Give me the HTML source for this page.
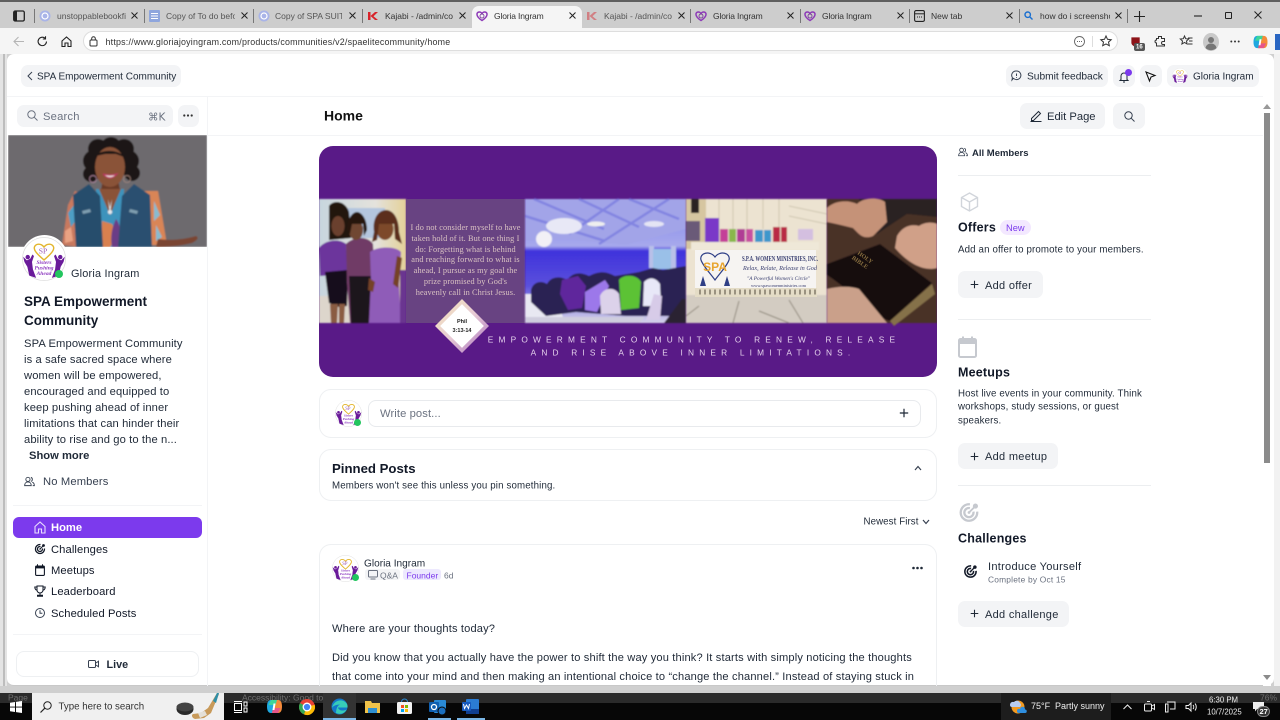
<!DOCTYPE html>
<html lang="en">
<head>
<meta charset="utf-8">
<title>Gloria Ingram</title>
<style>
html,body{margin:0;padding:0;width:1280px;height:720px;overflow:hidden;background:#d0d0d0;font-family:"Liberation Sans",sans-serif;color:#111827}
*{box-sizing:border-box}
.a{position:absolute}
.t{position:absolute;white-space:nowrap;line-height:1;transform:translateY(calc(-50% + 1.5px))}
.pill{position:absolute;background:#f3f4f6;border-radius:7px}
.tab{position:absolute;top:16px;font-size:8.5px;color:#333;white-space:nowrap;line-height:1;transform:translateY(-50%);overflow:hidden}
.x{position:absolute;top:11px;width:9px;height:9px}
.sep{position:absolute;top:9px;width:1px;height:14px;background:#777}
.line{position:absolute;height:1px;background:#eceef0}
.ic{position:absolute;overflow:visible}
.d{font-size:11.2px;letter-spacing:.11px;color:#1f2937;left:24px}
.nav{font-size:11.2px;letter-spacing:.1px;color:#111827;left:51px}
.r{font-size:9.7px;letter-spacing:.15px;color:#1f2937;left:958px}
.h{font-size:12.5px;font-weight:bold;letter-spacing:.2px;color:#111827;left:958px}
.btn{font-size:11px;letter-spacing:.3px;color:#1f2937}
.p{font-size:11.1px;letter-spacing:.155px;color:#1f2937;left:332px}
.tb{position:absolute;top:693px;height:27px}
.f{font-size:8.500px;color:#6f6f6f;top:696px}
</style>
</head>
<body>
<svg width="0" height="0" style="position:absolute">
<defs>
<symbol id="logo" viewBox="0 0 46 46">
<circle cx="23" cy="23" r="22.5" fill="#fff" stroke="#ddd" stroke-width=".8"/>
<path d="M23 24C16 18 12 14 13 10.500C14.500 6.500 20 6.500 23 10.500C26 6.500 31.500 6.500 33 10.500C34 14 30 18 23 24Z" fill="none" stroke="#e3b62e" stroke-width="1.500"/>
<text x="22" y="17" font-size="8" fill="#9b59b6" text-anchor="middle" font-family="Liberation Serif,serif">SP</text>
<circle cx="6" cy="21" r="2.300" fill="#6a1b9a"/><circle cx="40" cy="21" r="2.300" fill="#6a1b9a"/>
<path d="M2 22l3 3 4-2 2-4 1 1-2 6 1 8 3 8-6-2-2-9-3-5z" fill="#6a1b9a" stroke="#6a1b9a" stroke-width=".9"/>
<path d="M44 22l-3 3-4-2-2-4-1 1 2 6-1 8-3 8 6-2 2-9 3-5z" fill="#6a1b9a" stroke="#6a1b9a" stroke-width=".9"/>
<g font-size="5.800" font-style="italic" font-weight="bold" fill="#8e3bc0" text-anchor="middle" font-family="Liberation Serif,serif">
<text x="23" y="28">Sisters</text><text x="23" y="34">Pushing</text><text x="23" y="40">Ahead</text></g>
</symbol>
<symbol id="heart" viewBox="0 0 12 12"><path d="M6 10.5C2 8 .7 6 1 3.8C1.4 1.6 4.5 1.2 6 3.5C7.5 1.2 10.600 1.600 11 3.800C11.300 6 10 8 6 10.500Z" fill="none" stroke="#8e3bb8" stroke-width="1.500"/><circle cx="6" cy="6" r="2" fill="none" stroke="#6b2d8f" stroke-width=".8"/></symbol>
<symbol id="c" viewBox="0 0 12 12"><circle cx="6" cy="6" r="5.500" fill="#a9b4e8"/><circle cx="6" cy="6" r="3" fill="none" stroke="#fff" stroke-width="1.200"/></symbol>
<symbol id="k" viewBox="0 0 12 12"><path d="M1 2h2.500v8H1zM3.500 6L8 2h3L6.500 6.200 11 10H8z" fill="#d8232a"/></symbol>
<symbol id="x" viewBox="0 0 9 9"><path d="M1.500 1.500l6 6M7.500 1.500l-6 6" stroke="#222" stroke-width="1"/></symbol>
<symbol id="plus" viewBox="0 0 10 10"><path d="M5 .8v8.400M.8 5h8.400" stroke="#1f2937" stroke-width="1.200"/></symbol>
<symbol id="target" viewBox="0 0 24 24"><path d="M13 3.100A9 9 0 1 0 20.900 11" fill="none" stroke="currentColor" stroke-width="2.500"/><path d="M13 7.200A5 5 0 1 0 16.800 11" fill="none" stroke="currentColor" stroke-width="2.500"/><circle cx="12" cy="12" r="1.500" fill="currentColor"/><path d="M12 12L18 6" stroke="currentColor" stroke-width="2"/><circle cx="19" cy="5" r="2.800" fill="currentColor"/></symbol>
<symbol id="users" viewBox="0 0 12 12"><circle cx="4.300" cy="3.700" r="2.300" fill="none" stroke="currentColor"/><path d="M.7 10.500c0-2.500 1.500-4 3.600-4s3.600 1.500 3.600 4z" fill="none" stroke="currentColor"/><path d="M7.500 1.500a2.300 2.300 0 0 1 0 4.400M9 6.800c1.400.5 2.300 1.800 2.300 3.700H9.500" fill="none" stroke="currentColor"/></symbol>
<symbol id="cop" viewBox="0 0 15 15"><path d="M4 1C1 1 0 4 0 7.500 0 11 1 14 4 14h3l3-13z" fill="#1fa8e0"/><path d="M11 14c3 0 4-3 4-6.500S14 1 11 1H8L5 14z" fill="#f48a3a"/><path d="M4 1h6L8.500 6H1.500z" fill="#3dd69a"/><path d="M5 14h6l2.500-5H6.500z" fill="#e6558a"/><path d="M6.500 4.500h2L7.500 11h-2z" fill="#fff"/></symbol>
</defs>
</svg>

<!-- browser chrome -->
<div class="a" style="left:0;top:0;width:1280px;height:2px;background:#5f5f5f"></div>
<div class="a" style="left:0;top:2px;width:1280px;height:26px;background:#cdcdcd"></div>
<div class="a" style="left:0;top:28px;width:1280px;height:26px;background:#f5f5f5"></div>
<div class="a" style="left:1275px;top:34px;width:5px;height:16px;background:#2a66c2"></div>
<div class="a" style="left:0;top:54px;width:7px;height:632px;background:#e4e4e4"></div>
<div class="a" style="left:3px;top:54px;width:2px;height:632px;background:#bdbdbd"></div>
<div class="a" style="left:1274px;top:54px;width:6px;height:632px;background:#f2f2f2"></div>

<svg class="ic" style="left:13px;top:10px" width="12" height="12" viewBox="0 0 12 12"><rect x=".7" y="1" width="10.600" height="10" rx="1.500" fill="none" stroke="#222" stroke-width="1.300"/><rect x="1" y="1" width="3" height="10" fill="#222"/></svg>
<div class="sep" style="left:34px"></div>
<div class="sep" style="left:144px"></div>
<div class="sep" style="left:253px"></div>
<div class="sep" style="left:362px"></div>
<div class="sep" style="left:690px"></div>
<div class="sep" style="left:800px"></div>
<div class="sep" style="left:909px"></div>
<div class="sep" style="left:1019px"></div>
<div class="sep" style="left:1127px"></div>
<div class="a" style="left:472px;top:6px;width:110px;height:24px;background:#f5f5f5;border-radius:7px 7px 0 0"></div>

<svg class="ic" style="left:39px;top:10px" width="12" height="12"><use href="#c"/></svg>
<div class="tab" style="left:57px;width:69px;color:#555">unstoppablebookfin</div>
<svg class="x" style="left:130px"><use href="#x"/></svg>
<svg class="ic" style="left:149px;top:10px" width="11" height="12" viewBox="0 0 11 12"><rect width="11" height="12" rx="1" fill="#8fa6dd"/><path d="M2 3.500h7M2 6h7M2 8.500h7" stroke="#fff"/></svg>
<div class="tab" style="left:166px;width:69px;color:#555">Copy of To do befor</div>
<svg class="x" style="left:239.500px"><use href="#x"/></svg>
<svg class="ic" style="left:258px;top:10px" width="12" height="12"><use href="#c"/></svg>
<div class="tab" style="left:275px;width:67px;color:#555">Copy of SPA SUITE</div>
<svg class="x" style="left:348px"><use href="#x"/></svg>
<svg class="ic" style="left:367px;top:10px" width="12" height="12"><use href="#k"/></svg>
<div class="tab" style="left:385px;width:68px">Kajabi - /admin/cor</div>
<svg class="x" style="left:457.500px"><use href="#x"/></svg>
<svg class="ic" style="left:476px;top:10px" width="12" height="12"><use href="#heart"/></svg>
<div class="tab" style="left:494px;letter-spacing:-.15px">Gloria Ingram</div>
<svg class="x" style="left:567.500px"><use href="#x"/></svg>
<svg class="ic" style="left:586px;top:10px;opacity:.45" width="12" height="12"><use href="#k"/></svg>
<div class="tab" style="left:604px;width:68px;color:#555">Kajabi - /admin/cor</div>
<svg class="x" style="left:676.500px"><use href="#x"/></svg>
<svg class="ic" style="left:695px;top:10px" width="12" height="12"><use href="#heart"/></svg>
<div class="tab" style="left:713px;letter-spacing:-.15px">Gloria Ingram</div>
<svg class="x" style="left:786px"><use href="#x"/></svg>
<svg class="ic" style="left:804px;top:10px" width="12" height="12"><use href="#heart"/></svg>
<div class="tab" style="left:822px;letter-spacing:-.15px">Gloria Ingram</div>
<svg class="x" style="left:895.500px"><use href="#x"/></svg>
<svg class="ic" style="left:914px;top:10px" width="11" height="12" viewBox="0 0 11 12"><rect x=".6" y=".6" width="9.800" height="10.800" rx="1.500" fill="none" stroke="#222" stroke-width="1.100"/><path d="M1 3.800h9" stroke="#222"/><path d="M3 7h5" stroke="#222" stroke-dasharray="1 1"/></svg>
<div class="tab" style="left:931px">New tab</div>
<svg class="x" style="left:1005px"><use href="#x"/></svg>
<svg class="ic" style="left:1024px;top:11px" width="9" height="9" viewBox="0 0 9 9"><circle cx="3.700" cy="3.700" r="2.700" fill="none" stroke="#1a6fd0" stroke-width="1.400"/><path d="M5.700 5.700L8.500 8.500" stroke="#1a6fd0" stroke-width="1.400"/></svg>
<div class="tab" style="left:1040px;width:70px;color:#333">how do i screensho</div>
<svg class="x" style="left:1113.500px"><use href="#x"/></svg>
<svg class="ic" style="left:1134px;top:11px" width="11" height="11"><path d="M5.500 0v11M0 5.500h11" stroke="#222" stroke-width="1.100"/></svg>
<svg class="ic" style="left:1194px;top:15px" width="8" height="2"><path d="M0 1h8" stroke="#222" stroke-width="1.100"/></svg>
<svg class="ic" style="left:1225px;top:12px" width="7" height="7"><rect x=".5" y=".5" width="6" height="6" rx=".5" fill="none" stroke="#222"/></svg>
<svg class="ic" style="left:1254px;top:11px" width="8" height="8"><path d="M.5.500l7 7M7.500.500l-7 7" stroke="#222"/></svg>

<!-- toolbar -->
<svg class="ic" style="left:13px;top:36px" width="11" height="11"><path d="M11 5.500H1M5.500 1L1 5.500 5.500 10" fill="none" stroke="#b5b5b5" stroke-width="1.100"/></svg>
<svg class="ic" style="left:37px;top:36px" width="11" height="11" viewBox="0 0 11 11"><path d="M9.500 5.500A4.200 4.200 0 1 1 8 2.200" fill="none" stroke="#222" stroke-width="1.100"/><path d="M8.500.3v2.700H5.800" fill="none" stroke="#222" stroke-width="1.100"/></svg>
<svg class="ic" style="left:61px;top:36px" width="11" height="11" viewBox="0 0 11 11"><path d="M1 5L5.500 1 10 5v5.500H7V7H4v3.500H1z" fill="none" stroke="#222" stroke-width="1.100"/></svg>
<div class="a" style="left:83px;top:31px;width:1035px;height:20px;background:#fff;border:1px solid #dedede;border-radius:10px"></div>
<svg class="ic" style="left:89px;top:36px" width="9" height="11" viewBox="0 0 9 11"><rect x="1" y="4" width="7" height="6" rx="1" fill="none" stroke="#333"/><path d="M2.700 4V2.500a1.800 1.800 0 0 1 3.600 0V4" fill="none" stroke="#333"/></svg>
<div class="t" style="left:105.500px;top:41px;font-size:8.900px;letter-spacing:.21px;color:#333">https://www.gloriajoyingram.com/products/communities/v2/spaelitecommunity/home</div>
<svg class="ic" style="left:1074px;top:36px" width="11" height="11" viewBox="0 0 11 11"><circle cx="5.500" cy="5.500" r="5" fill="none" stroke="#666" stroke-width=".9"/><path d="M3 5.500h5" stroke="#666" stroke-dasharray="1 1"/></svg>
<div class="a" style="left:1092px;top:36px;width:1px;height:11px;background:#ddd"></div>
<svg class="ic" style="left:1100px;top:35px" width="12" height="12" viewBox="0 0 12 12"><path d="M6 1l1.500 3.300 3.700.4-2.700 2.400.8 3.600L6 8.900l-3.300 1.800.8-3.600L.8 4.700l3.700-.4z" fill="none" stroke="#333"/></svg>
<svg class="ic" style="left:1130px;top:36px" width="12" height="12" viewBox="0 0 12 13"><path d="M1 1.500h9v6c0 2-2 3.500-4.500 4.500C3 11 1 9.500 1 7.500z" fill="#8d1318"/></svg>
<div class="a" style="left:1134px;top:43px;width:11px;height:8px;background:#555;border-radius:2px"></div>
<div class="t" style="left:1136px;top:45.500px;font-size:6px;color:#fff;font-weight:bold">16</div>
<svg class="ic" style="left:1154px;top:35px" width="12" height="12" viewBox="0 0 12 12"><path d="M4.500 1.500h3v2h3v3H9a1.500 1.500 0 0 0 0 3h1.500v1.500h-8V8a1.500 1.500 0 0 1 0-3V3.500h2z" fill="none" stroke="#333"/></svg>
<svg class="ic" style="left:1180px;top:35px" width="13" height="12" viewBox="0 0 13 12"><path d="M4.500 1l1.200 2.700 3 .3-2.200 2 .6 3L4.500 7.500 1.900 9l.6-3L.3 4l3-.3z" fill="none" stroke="#333"/><path d="M8 3h4.500M9 6h3.500M8 9h4.500" stroke="#333"/></svg>
<svg class="ic" style="left:1203px;top:33px" width="16" height="18" viewBox="0 0 16 18"><ellipse cx="8" cy="9" rx="8" ry="9" fill="#c9c9c9"/><circle cx="8" cy="7" r="3" fill="#777"/><path d="M2.500 15c.5-3 3-4.500 5.500-4.500s5 1.500 5.500 4.500A8 8 0 0 1 2.500 15z" fill="#777"/></svg>
<svg class="ic" style="left:1230px;top:40px" width="10" height="3"><circle cx="1.300" cy="1.500" r="1" fill="#333"/><circle cx="5" cy="1.500" r="1" fill="#333"/><circle cx="8.700" cy="1.500" r="1" fill="#333"/></svg>
<svg class="ic" style="left:1253px;top:35px" width="15" height="14"><use href="#cop"/></svg>

<!-- page -->
<div class="a" style="left:7px;top:54px;width:1267px;height:632px;background:#fff;border-radius:7px;border-bottom:1px solid #c8c8c8"></div>

<!-- header -->
<div class="pill" style="left:21px;top:65px;width:160px;height:22px"></div>
<svg class="ic" style="left:27px;top:71px" width="6" height="10"><path d="M5 1L1 5l4 4" fill="none" stroke="#374151"/></svg>
<div class="t" style="left:37px;top:76px;font-size:10px;color:#1f2937">SPA Empowerment Community</div>
<div class="pill" style="left:1006px;top:65px;width:102px;height:22px"></div>
<svg class="ic" style="left:1011px;top:70px" width="11" height="11" viewBox="0 0 11 11"><path d="M5.500 1a4.300 4.300 0 1 1-3 7.300L1 10l.4-2.400A4.300 4.300 0 0 1 5.500 1z" fill="none" stroke="#374151"/><path d="M5.500 3.500v2.500M5.500 7v.8" stroke="#374151"/></svg>
<div class="t" style="left:1027px;top:76px;font-size:10.200px;color:#1f2937">Submit feedback</div>
<div class="pill" style="left:1113px;top:65px;width:22px;height:22px"></div>
<svg class="ic" style="left:1118px;top:71px" width="12" height="12" viewBox="0 0 12 12"><path d="M3 8.500V5a3 3 0 0 1 6 0v3.500l1 1H2zM5 11h2" fill="none" stroke="#1f2937"/></svg>
<div class="a" style="left:1125px;top:69px;width:7px;height:7px;background:#7c3aed;border-radius:50%"></div>
<div class="pill" style="left:1140px;top:65px;width:22px;height:22px"></div>
<svg class="ic" style="left:1145px;top:71px" width="11" height="11" viewBox="0 0 11 11"><path d="M1 1l9 3.500-4 1.500-1.500 4z" fill="none" stroke="#111" stroke-width="1.100"/></svg>
<div class="pill" style="left:1167px;top:65px;width:92px;height:22px"></div>
<svg class="ic" style="left:1172px;top:68px" width="16" height="16"><use href="#logo"/></svg>
<div class="t" style="left:1193px;top:76px;font-size:10px;color:#1f2937">Gloria Ingram</div>
<div class="line" style="left:7px;top:96px;width:1256px;background:#f3f4f6"></div>
<div class="a" style="left:207px;top:96px;width:1px;height:590px;background:#f3f4f6"></div>
<div class="line" style="left:208px;top:135px;width:1055px;background:#f3f4f6"></div>

<!-- sidebar -->
<div class="pill" style="left:17px;top:105px;width:156px;height:22px"></div>
<svg class="ic" style="left:27px;top:110px" width="11" height="11"><circle cx="4.500" cy="4.500" r="3.700" fill="none" stroke="#6b7280"/><path d="M7.300 7.300L10.500 10.500" stroke="#6b7280"/></svg>
<div class="t" style="left:43px;top:116px;font-size:11.200px;letter-spacing:.2px;color:#6b7280">Search</div>
<div class="t" style="left:148px;top:116px;font-size:10.500px;color:#6b7280;font-family:'DejaVu Sans',sans-serif">⌘K</div>
<div class="pill" style="left:178px;top:105px;width:21px;height:22px"></div>
<svg class="ic" style="left:183px;top:114px" width="10" height="3"><circle cx="1.300" cy="1.500" r="1.100" fill="#333"/><circle cx="5" cy="1.500" r="1.100" fill="#333"/><circle cx="8.700" cy="1.500" r="1.100" fill="#333"/></svg>

<svg class="ic" style="left:8px;top:135px" width="199" height="112" viewBox="0 0 199 112">
<defs><clipPath id="ph"><rect width="199" height="112"/></clipPath><filter id="sb"><feGaussianBlur stdDeviation=".7"/></filter></defs>
<g clip-path="url(#ph)"><g filter="url(#sb)">
<rect width="199" height="112" fill="#6d6b6e"/>
<circle cx="86" cy="26" r="11" fill="#1c1512"/><circle cx="120" cy="26" r="11" fill="#1c1512"/><circle cx="90" cy="14" r="10" fill="#1c1512"/><circle cx="116" cy="14" r="10" fill="#1c1512"/><circle cx="103" cy="12" r="10" fill="#1c1512"/><circle cx="83" cy="39" r="8" fill="#1c1512"/><circle cx="124" cy="38" r="8" fill="#1c1512"/>
<path d="M95 44h15l3 16H92z" fill="#6b3a28"/>
<ellipse cx="102" cy="32" rx="15" ry="20" fill="#8a5237"/>
<path d="M88 21c4-7 23-7 28 1l-8-3-11 0z" fill="#1c1512"/>
<path d="M95 39q7 8 14 0q-7 2-14 0" fill="#e8dada" stroke="#b8345f" stroke-width="1.200"/>
<circle cx="85" cy="44" r="3.500" fill="none" stroke="#b98ca8" stroke-width=".7"/><circle cx="119" cy="44" r="3.500" fill="none" stroke="#a98a80" stroke-width=".7"/>
<path d="M54 110l6-40 7-14 10 4-5 52z" fill="#c8795f"/>
<path d="M60 78l6-8 3 14-6 8z" fill="#4e9fc4"/><path d="M57 96l6-4 2 14-8 2z" fill="#e9a283"/>
<path d="M150 56l9 54h-24l-6-54z" fill="#d98557"/>
<path d="M146 66l6 14-6 6zM148 90l6 12-6 4z" fill="#88bbd0"/>
<path d="M150 104c14 2 28 0 38-3 4 2 0 5-4 7-12 3-24 4-36 4z" fill="#7a4530"/>
<path d="M88 54l28 0-2 58H90z" fill="#3d93bc"/>
<path d="M91 54l22 0-11 26z" fill="#8a5237"/>
<path d="M94 86l10 3 6 12-8 11h-8z" fill="#d8804f"/>
<path d="M108 84c5 6 6 18 2 28h-6c-2-10 0-20 4-28z" fill="#6a3d86"/>
<path d="M65 60l16-11 11 12 3 51H68z" fill="#284d6c"/>
<path d="M142 60l-16-11-12 12-4 51h34z" fill="#2a5070"/>
<path d="M74 76l8-2 1 3-8 2zM122 74l8 2-1 3-8-2z" fill="#7f9fb0"/>
<path d="M100 64l2 8 2-8-2 16z" fill="#dfe3e8"/>
<circle cx="102" cy="77" r="2.200" fill="#e2e6ea"/>
</g></g>
</svg>
<div class="a" style="left:21px;top:235px;width:47px;height:47px;border-radius:50%;background:#fff"></div>
<svg class="ic" style="left:22px;top:237px" width="44" height="44"><use href="#logo"/></svg>
<div class="a" style="left:55px;top:270px;width:8px;height:8px;border-radius:50%;background:#22c55e"></div>
<div class="t" style="left:71px;top:273px;font-size:10.900px;letter-spacing:.2px;color:#1f2937">Gloria Ingram</div>
<div class="t" style="left:24px;top:299.500px;font-size:13.500px;font-weight:bold">SPA Empowerment</div>
<div class="t" style="left:24px;top:318.500px;font-size:13.500px;font-weight:bold">Community</div>
<div class="t d" style="top:343px">SPA Empowerment Community</div>
<div class="t d" style="top:359px">is a safe sacred space where</div>
<div class="t d" style="top:375px">women will be empowered,</div>
<div class="t d" style="top:391px">encouraged and equipped to</div>
<div class="t d" style="top:407px">keep pushing ahead of inner</div>
<div class="t d" style="top:423px">limitations that can hinder their</div>
<div class="t d" style="top:439px">ability to rise and go to the n...</div>
<div class="t d" style="top:455px;left:29px;font-weight:bold;letter-spacing:0">Show more</div>
<svg class="ic" style="left:24px;top:476px;color:#374151" width="11" height="11"><use href="#users"/></svg>
<div class="t" style="left:43px;top:480.500px;font-size:11.200px;letter-spacing:.15px;color:#374151">No Members</div>
<div class="line" style="left:13px;top:505px;width:189px;background:#f3f4f6"></div>
<div class="a" style="left:13px;top:517px;width:189px;height:21px;background:#7c3aed;border-radius:6px"></div>
<svg class="ic" style="left:34px;top:521px" width="12" height="13" viewBox="0 0 12 13"><path d="M1 5.500L6 1l5 4.500V12H7.500V8h-3v4H1z" fill="none" stroke="#e9dcff" stroke-width="1.100"/></svg>
<div class="t nav" style="top:526.500px;color:#fff;font-weight:bold;letter-spacing:0">Home</div>
<svg class="ic" style="left:34px;top:543px;color:#111827" width="12" height="12"><use href="#target"/></svg>
<div class="t nav" style="top:549px">Challenges</div>
<svg class="ic" style="left:35px;top:564px" width="10" height="12" viewBox="0 0 10 12"><rect x=".6" y="2" width="8.800" height="9.400" rx="1" fill="none" stroke="#111827" stroke-width="1.100"/><rect x=".6" y="2" width="8.800" height="2.400" fill="#111827"/><path d="M2.500.3v2M7.500.3v2" stroke="#111827"/></svg>
<div class="t nav" style="top:570px">Meetups</div>
<svg class="ic" style="left:34px;top:585px" width="12" height="12" viewBox="0 0 12 12"><path d="M3 1h6v4a3 3 0 0 1-6 0zM3 2H.8c0 2 1 3 2.500 3.500M9 2h2.200c0 2-1 3-2.500 3.500M6 8v2M3.500 11.300h5v-1h-5z" fill="none" stroke="#111827"/></svg>
<div class="t nav" style="top:590.500px">Leaderboard</div>
<svg class="ic" style="left:35px;top:608px" width="10" height="10" viewBox="0 0 10 10"><circle cx="5" cy="5" r="4.500" fill="none" stroke="#374151"/><path d="M5 2.300V5.300H7.400" fill="none" stroke="#374151"/></svg>
<div class="t nav" style="top:613px">Scheduled Posts</div>
<div class="line" style="left:13px;top:634px;width:189px;background:#f3f4f6"></div>
<div class="a" style="left:16px;top:651px;width:183px;height:26px;border:1px solid #eef0f2;border-radius:8px"></div>
<svg class="ic" style="left:88px;top:660px" width="11" height="8" viewBox="0 0 11 8"><rect x=".5" y=".5" width="7" height="7" rx="1" fill="none" stroke="#374151"/><path d="M8 3l2.500-1.800v5.600L8 5" fill="none" stroke="#374151"/></svg>
<div class="t" style="left:106.500px;top:664px;font-size:10.800px;font-weight:bold;color:#1f2937">Live</div>

<!-- main top -->
<div class="t" style="left:324px;top:114px;font-size:14px;font-weight:bold;color:#111">Home</div>
<div class="pill" style="left:1020px;top:103px;width:85px;height:26px"></div>
<svg class="ic" style="left:1030px;top:110px" width="12" height="12" viewBox="0 0 12 12"><path d="M1.500 8.500L8.500 1.500l2 2-7 7H1.500zM.5 11.500h11" fill="none" stroke="#1f2937"/></svg>
<div class="t" style="left:1047px;top:116px;font-size:11.200px;color:#1f2937">Edit Page</div>
<div class="pill" style="left:1113px;top:103px;width:32px;height:26px"></div>
<svg class="ic" style="left:1124px;top:111px" width="11" height="11"><circle cx="4.500" cy="4.500" r="3.700" fill="none" stroke="#374151"/><path d="M7.300 7.300L10.500 10.500" stroke="#374151"/></svg>

<!-- banner -->
<svg class="ic" style="left:319px;top:146px" width="618" height="231" viewBox="0 0 618 231">
<defs>
<clipPath id="bn"><rect width="618" height="231" rx="14"/></clipPath>
<linearGradient id="dia" x1="0" y1="0" x2="1" y2="1"><stop offset="0" stop-color="#f5e9b8"/><stop offset=".5" stop-color="#e8cbd5"/><stop offset="1" stop-color="#a56dbd"/></linearGradient>
<linearGradient id="ball" x1="0" y1="0" x2="0" y2="1"><stop offset="0" stop-color="#7f83ea"/><stop offset=".38" stop-color="#a7a9ec"/><stop offset=".42" stop-color="#3f32dc"/><stop offset=".7" stop-color="#5a50dc"/><stop offset="1" stop-color="#d6d4ea"/></linearGradient>
<linearGradient id="ph1" x1="0" y1="0" x2="1" y2="0"><stop offset="0" stop-color="#c7d6de"/><stop offset=".65" stop-color="#e4e2dc"/><stop offset="1" stop-color="#e3d198"/></linearGradient>
<filter id="bb"><feGaussianBlur stdDeviation=".8"/></filter>
</defs>
<g clip-path="url(#bn)">
<rect width="618" height="231" fill="#591a87"/>
<!-- women -->
<g filter="url(#bb)">
<rect y="53" width="87" height="124" fill="url(#ph1)"/>
<rect x="24" y="62" width="42" height="30" fill="#b4c6de"/>
<rect y="150" width="40" height="27" fill="#ddd6cc"/>
<path d="M10 60c4-6 16-6 20 6l2 26-22 2z" fill="#24160f"/>
<ellipse cx="19" cy="80" rx="6.500" ry="10" fill="#6a412d"/>
<path d="M0 102c6-8 20-10 27-4l2 30-28 2z" fill="#6c359c"/>
<path d="M6 126l23-2-1 36-8 1-10-4z" fill="#14111a"/>
<path d="M11 158h8l-1 19h-6zM20 158h6l-1 19h-5z" fill="#8a5b42"/>
<path d="M27 98c8-8 22-8 27 0l2 38-3 41H31l-3-40z" fill="#6f3a66"/>
<path d="M30 130h22l-2 47H32z" fill="#1e141e"/>
<ellipse cx="37" cy="84" rx="7" ry="10" fill="#704630"/>
<path d="M28 84c0-12 6-18 10-18s10 6 10 18l-3 6-1-12h-11l-2 10z" fill="#26180f"/>
<path d="M51 106c8-6 26-6 31 0l-2 32 2 39H50l2-42z" fill="#8f5cb8"/>
<path d="M50 132l6 4-2 10-5-2zM78 110l5 2-4 30-5-4z" fill="#754327"/>
<ellipse cx="66" cy="83" rx="8.500" ry="11" fill="#7d4a2c"/>
<path d="M55 86c-2-14 5-22 12-22s13 8 13 22l3 12-7-5-1-15H60l-2 16-5 2z" fill="#5c2e1c"/>
<rect x="81" y="124" width="6" height="53" fill="#6b3690"/>
</g>
<rect x="87" y="53" width="119" height="124" fill="#684382"/>
<g font-family="Liberation Serif,serif" font-size="8.300" fill="#d9c2c2" text-anchor="middle" letter-spacing=".1">
<text x="146.500" y="84">I do not consider myself to have</text>
<text x="146.500" y="95">taken hold of it. But one thing I</text>
<text x="146.500" y="106">do: Forgetting what is behind</text>
<text x="146.500" y="116">and reaching forward to what is</text>
<text x="146.500" y="127">ahead, I pursue as my goal the</text>
<text x="146.500" y="138">prize promised by God's</text>
<text x="146.500" y="149">heavenly call in Christ Jesus.</text>
</g>
<!-- ballroom -->
<g filter="url(#bb)">
<rect x="206" y="53" width="161" height="124" fill="url(#ball)"/>
<path d="M206 53h125l36 0v30l-60 16-60-6-41 2z" fill="#a2a4e8"/>
<path d="M215 53l70 30M260 53l60 28M310 53l50 20M206 70l80 25M300 53l-50 35M350 53l-70 45" stroke="#6e6fdd" stroke-width="2.500" opacity=".6"/>
<ellipse cx="245" cy="80" rx="18" ry="8" fill="#e8e8f6"/>
<circle cx="225" cy="93" r="8" fill="#f2f0f6"/>
<ellipse cx="277" cy="78" rx="9" ry="2.500" fill="#eee"/><ellipse cx="335" cy="78" rx="10" ry="3" fill="#e4e4f4"/>
<path d="M330 100l5 0 0 22-5 0zM352 100h5v24h-5z" fill="#b9c0e8"/>
<rect x="334" y="103" width="18" height="20" fill="#9ac0e8"/>
<path d="M206 148h30l10 29h-40z" fill="#e8e8f2"/>
<path d="M212 144c2-8 10-10 16-6 4-8 14-8 20-4 6-8 14-8 22-4 12-6 18-4 26 0l24-4 14-4 10 2 23-4v50h-60l-50-4-30 4-15-14z" fill="#2a2352"/>
<path d="M243 134l16-4 8 10-4 22-14 2-8-16z" fill="#5e289c"/>
<path d="M266 146l20-12 4 6-12 26-12-2z" fill="#9c78ea"/>
<path d="M281 150c3-8 14-10 19-2l2 20h-20z" fill="#dcd2ea"/>
<path d="M300 134c4-6 18-6 22 2l-2 26-18 2z" fill="#5cc235"/>
<path d="M325 136c6-6 12-4 16 2l1 22-18 0z" fill="#e8e8f8"/>
<path d="M335 148l8 2-2 24h-14z" fill="#d7cbe8"/>
<path d="M206 171h120l-6 6H206z" fill="#cfcdde"/>
<path d="M345 177l18-24 4 0v24z" fill="#2a2230"/>
</g>
<!-- table -->
<g filter="url(#bb)">
<rect x="367" y="53" width="141" height="124" fill="#ece3d1"/>
<path d="M386 53v50M400 53v50M414 53v30M428 53v30M444 53v30M460 53v30M470 60l38 8M470 70l38 8" stroke="#cfc6b0"/>
<rect x="367" y="53" width="20" height="50" fill="#d6c6a0"/>
<rect x="372" y="53" width="8" height="14" fill="#2a2020"/>
<rect x="367" y="75" width="14" height="20" fill="#6a5a78"/>
<rect x="386" y="72" width="14" height="24" fill="#7a38c8"/>
<rect x="401" y="83" width="8" height="15" fill="#c43f98"/><rect x="410" y="83" width="7" height="15" fill="#89b74b"/><rect x="418" y="83" width="8" height="15" fill="#b03c95"/><rect x="427" y="83" width="7" height="15" fill="#c84fa0"/><rect x="436" y="84" width="8" height="14" fill="#3c97cc"/><rect x="445" y="84" width="7" height="14" fill="#3c97cc"/><rect x="454" y="81" width="7" height="17" fill="#b92b45"/><rect x="462" y="81" width="6" height="17" fill="#b92b45"/>
<rect x="479" y="83" width="15" height="11" fill="#d4bfe0"/>
<rect x="372" y="96" width="128" height="8" fill="#efe8d8"/>
<rect x="367" y="149" width="141" height="28" fill="#d3ccc2"/>
<path d="M380 160l-13 10M420 155l-6 22M470 154l14 23M440 165l30 12" stroke="#8f877a"/>
</g>
<rect x="376" y="104" width="121" height="38" fill="#f6f4f2"/>
<rect x="376" y="142" width="122" height="9" fill="#e4dcc6"/>
<path d="M380 142h118" stroke="#9a9280" stroke-width="5" stroke-dasharray="2 3" fill="none" transform="translate(0,4)"/>
<path d="M382 114c-2-7 9-10 14-3 5-7 16-4 14 3-2 6-9 13-14 20-5-7-12-14-14-20z" fill="none" stroke="#2f3f86" stroke-width="1.200"/>
<text x="396" y="125" font-size="12" font-weight="bold" fill="#e8a530" text-anchor="middle">SPA</text>
<path d="M384 130l-3 10h6zM408 130l3 10h-6z" fill="#2f3f86"/>
<g font-family="Liberation Serif,serif" fill="#3a3f70">
<text x="423" y="115" font-size="7" font-weight="bold" textLength="76" lengthAdjust="spacingAndGlyphs">S.P.A. WOMEN MINISTRIES, INC.</text>
<text x="424" y="124" font-size="6.500" font-style="italic" textLength="74" lengthAdjust="spacingAndGlyphs">Relax, Relate, Release in God</text>
<text x="428" y="134" font-size="5" font-style="italic" textLength="63" lengthAdjust="spacingAndGlyphs">"A Powerful Women's Circle"</text>
<text x="432" y="141" font-size="4" textLength="55" lengthAdjust="spacingAndGlyphs">www.spawomenministries.com</text>
</g>
<!-- hands -->
<g filter="url(#bb)">
<rect x="508" y="53" width="110" height="124" fill="#4a3025"/>
<path d="M540 53h78v18l-30-3-30 20z" fill="#2a2320"/>
<path d="M508 62c8-8 22-8 30-4 6-6 20-8 28-2l2 20-14 14c-10 4-14-2-20-8-8-2-16-4-26-6z" fill="#c59278"/>
<path d="M578 90c6-10 14-12 22-10 6-4 14-4 18-2v44c-14 4-30-6-42-20z" fill="#d0a088"/>
<path d="M508 118l53-20 52 39-42 38c-20-6-38-30-63-46z" fill="#16110f"/>
<path d="M571 175l42-37 3 10-41 32z" fill="#85714a"/>
<path d="M508 143c12-3 24-3 32 0l28 34h-60z" fill="#caa08a"/>
</g>
<g transform="translate(538,108) rotate(35)" fill="#8a7040" font-family="Liberation Serif,serif" font-size="6" font-weight="bold"><text>HOLY</text><text x="-2" y="7">BIBLE</text></g>
<!-- diamond -->
<path d="M116 180l27-27 27 27-27 27z" fill="url(#dia)"/>
<rect x="127.500" y="164.500" width="31" height="31" fill="#fff" transform="rotate(45 143 180)"/>
<g text-anchor="middle" font-size="5.500" font-weight="bold" fill="#222"><text x="143" y="177">Phil</text><text x="143" y="186">3:13-14</text></g>
<g font-size="8.300" fill="#e4d0ec" text-anchor="middle">
<text x="375" y="196.500" letter-spacing="5.200">EMPOWERMENT COMMUNITY TO RENEW, RELEASE</text>
<text x="374" y="209.500" letter-spacing="5.200">AND RISE ABOVE INNER LIMITATIONS.</text>
</g>
</g>
</svg>

<!-- write post -->
<div class="a" style="left:319px;top:389px;width:618px;height:49px;border:1px solid #eef0f2;border-radius:12px"></div>
<svg class="ic" style="left:335px;top:400px" width="27" height="27"><use href="#logo"/></svg>
<div class="a" style="left:354px;top:419px;width:7px;height:7px;border-radius:50%;background:#22c55e"></div>
<div class="a" style="left:368px;top:400px;width:553px;height:27px;border:1px solid #e8eaed;border-radius:8px"></div>
<div class="t" style="left:380px;top:413px;font-size:11.200px;letter-spacing:.1px;color:#6b7280">Write post...</div>
<svg class="ic" style="left:899px;top:408px" width="10" height="10"><use href="#plus"/></svg>

<!-- pinned -->
<div class="a" style="left:319px;top:449px;width:618px;height:52px;border:1px solid #eef0f2;border-radius:12px"></div>
<div class="t" style="left:332px;top:467px;font-size:13.200px;font-weight:bold;color:#111827">Pinned Posts</div>
<div class="t" style="left:332px;top:484.500px;font-size:9.700px;letter-spacing:.15px;color:#1f2937">Members won't see this unless you pin something.</div>
<svg class="ic" style="left:914px;top:465px" width="8" height="6"><path d="M1 5l3-3.500L7 5" fill="none" stroke="#374151" stroke-width="1.200"/></svg>
<div class="t" style="left:863.500px;top:521px;font-size:9.700px;letter-spacing:.1px;color:#1f2937">Newest First</div>
<svg class="ic" style="left:922px;top:519px" width="8" height="6"><path d="M1 1l3 3.500L7 1" fill="none" stroke="#374151" stroke-width="1.200"/></svg>

<!-- post -->
<div class="a" style="left:319px;top:544px;width:618px;height:142px;border:1px solid #eef0f2;border-bottom:0;border-radius:12px 12px 0 0"></div>
<svg class="ic" style="left:332px;top:555px" width="27" height="27"><use href="#logo"/></svg>
<div class="a" style="left:352px;top:574px;width:7px;height:7px;border-radius:50%;background:#22c55e"></div>
<div class="t" style="left:364px;top:563px;font-size:10.100px;color:#1f2937">Gloria Ingram</div>
<div class="a" style="left:365px;top:569px;width:35px;height:11px;background:#f3f4f6;border-radius:3px"></div>
<svg class="ic" style="left:368px;top:570px" width="10" height="10" viewBox="0 0 10 10"><rect x=".5" y=".5" width="9" height="6.500" rx=".7" fill="none" stroke="#6b7280"/><path d="M2.500 9h5" stroke="#6b7280"/></svg>
<div class="t" style="left:380px;top:573.500px;font-size:8.500px;color:#6b7280">Q&amp;A</div>
<div class="a" style="left:403px;top:569px;width:38px;height:11px;background:#ede9fe;border-radius:3px"></div>
<div class="t" style="left:406.500px;top:573.500px;font-size:8.500px;color:#7c3aed">Founder</div>
<div class="t" style="left:444px;top:573.500px;font-size:8.500px;color:#6b7280">6d</div>
<svg class="ic" style="left:912px;top:566px" width="11" height="4"><circle cx="1.500" cy="2" r="1.300" fill="#1f2937"/><circle cx="5.500" cy="2" r="1.300" fill="#1f2937"/><circle cx="9.500" cy="2" r="1.300" fill="#1f2937"/></svg>
<div class="t p" style="top:627.500px">Where are your thoughts today?</div>
<div class="t p" style="top:657px">Did you know that you actually have the power to shift the way you think? It starts with simply noticing the thoughts</div>
<div class="t p" style="top:676px">that come into your mind and then making an intentional choice to “change the channel.” Instead of staying stuck in</div>

<!-- right col -->
<svg class="ic" style="left:958px;top:147px;color:#374151" width="10" height="10"><use href="#users"/></svg>
<div class="t" style="left:972px;top:151.500px;font-size:9.500px;font-weight:bold;color:#1f2937">All Members</div>
<div class="line" style="left:958px;top:175px;width:193px"></div>
<svg class="ic" style="left:960px;top:192px" width="19" height="20" viewBox="0 0 19 20"><path d="M9.500 1L17.500 5.500V14.500L9.500 19 1.500 14.500V5.500zM1.500 5.500L9.500 10 17.500 5.500M9.500 10V19" fill="none" stroke="#d1d5db" stroke-width="1.400"/></svg>
<div class="t h" style="top:225.500px">Offers</div>
<div class="a" style="left:1000px;top:220px;width:31px;height:15px;background:#f3e8ff;border-radius:8px"></div>
<div class="t" style="left:1006px;top:226.500px;font-size:9.300px;color:#7c3aed">New</div>
<div class="t r" style="top:248.500px">Add an offer to promote to your members.</div>
<div class="pill" style="left:958px;top:271px;width:85px;height:27px"></div>
<svg class="ic" style="left:970px;top:280px" width="9" height="9"><use href="#plus"/></svg>
<div class="t btn" style="left:985px;top:285px">Add offer</div>
<div class="line" style="left:958px;top:319px;width:193px"></div>
<svg class="ic" style="left:958px;top:336px" width="20" height="22" viewBox="0 0 20 22"><rect x="1" y="3" width="17" height="18" rx="1.500" fill="none" stroke="#c6c9cf" stroke-width="2"/><rect x="1" y="3" width="17" height="5" fill="#c6c9cf"/><path d="M5 .5v3M14 .5v3" stroke="#c6c9cf" stroke-width="2"/></svg>
<div class="t h" style="top:370.500px">Meetups</div>
<div class="t r" style="top:392.500px">Host live events in your community. Think</div>
<div class="t r" style="top:406px">workshops, study sessions, or guest</div>
<div class="t r" style="top:419.500px">speakers.</div>
<div class="pill" style="left:958px;top:443px;width:100px;height:26px"></div>
<svg class="ic" style="left:970px;top:451.500px" width="9" height="9"><use href="#plus"/></svg>
<div class="t btn" style="left:985px;top:455.500px">Add meetup</div>
<div class="line" style="left:958px;top:485px;width:193px"></div>
<svg class="ic" style="left:958px;top:501px;color:#c6c9cf" width="22" height="23"><use href="#target"/></svg>
<div class="t h" style="top:537px">Challenges</div>
<svg class="ic" style="left:963px;top:564px;color:#111827" width="15" height="15"><use href="#target"/></svg>
<div class="t" style="left:988px;top:566px;font-size:11.100px;letter-spacing:.25px;color:#1f2937">Introduce Yourself</div>
<div class="t" style="left:988px;top:577.500px;font-size:8.400px;letter-spacing:.2px;color:#6b7280">Complete by Oct 15</div>
<div class="pill" style="left:958px;top:601px;width:111px;height:26px"></div>
<svg class="ic" style="left:970px;top:609px" width="9" height="9"><use href="#plus"/></svg>
<div class="t btn" style="left:985px;top:614px">Add challenge</div>

<!-- scrollbar -->
<div class="a" style="left:1263px;top:97px;width:8px;height:589px;background:#fff"></div>
<div class="a" style="left:1264px;top:113px;width:6px;height:350px;background:#8b8b8b"></div>
<svg class="ic" style="left:1263px;top:104px" width="8" height="5"><path d="M0 5L4 0l4 5z" fill="#999"/></svg>
<svg class="ic" style="left:1263px;top:675px" width="8" height="5"><path d="M0 0h8L4 5z" fill="#8b8b8b"/></svg>

<!-- taskbar -->
<div class="a" style="left:0;top:686px;width:1280px;height:7px;background:#cfcfcf"></div>
<div class="a" style="left:0;top:693px;width:1280px;height:10px;background:#2b2b2b"></div>
<div class="t f" style="left:8px">Page</div>
<div class="t f" style="left:242px">Accessibility: Good to go</div>
<div class="t f" style="left:1055px">Focus</div>
<div class="t f" style="left:1260px">76%</div>
<div class="a" style="left:0;top:703px;width:1280px;height:17px;background:#070707"></div>
<svg class="ic" style="left:10px;top:701px" width="12" height="12"><path d="M0 1.800L5 1v4.600H0zM6 .9L12 0v5.600H6zM0 6.500h5V11l-5-.7zM6 6.500h6V12l-6-.9z" fill="#fff"/></svg>
<div class="tb" style="left:32px;width:192px;background:#f0f0f0"></div>
<svg class="ic" style="left:40px;top:701px" width="12" height="12"><circle cx="7.500" cy="4.500" r="3.700" fill="none" stroke="#222"/><path d="M4.800 7.200L.5 11.500" stroke="#222" stroke-width="1.200"/></svg>
<div class="t" style="left:58.500px;top:705.500px;font-size:9.700px;color:#333">Type here to search</div>
<svg class="ic" style="left:176px;top:693px" width="44" height="27" viewBox="0 0 44 27"><ellipse cx="9" cy="16" rx="8.500" ry="6" fill="#2a2a2a"/><ellipse cx="9" cy="14" rx="8.500" ry="4.500" fill="#444"/><path d="M41 0l-9 15-7 5-8 1c-2 1-1 4 2 5l9-1 7-5 8-19z" fill="#c89a5a"/><path d="M41 0l-4 8 3 2 3-10z" fill="#2f8fa8"/><path d="M22 20l7-2 2 4-7 3z" fill="#e4e0d8"/></svg>
<svg class="ic" style="left:234px;top:701px" width="13" height="12"><rect x=".5" y="2.500" width="7" height="7" fill="none" stroke="#fff"/><path d="M0 .5h8M0 11.500h8M10 1h3v4h-3zM10 7h3v4h-3z" fill="none" stroke="#fff"/></svg>
<svg class="ic" style="left:267px;top:699px" width="15" height="15"><use href="#cop"/></svg>
<svg class="ic" style="left:299px;top:699px" width="16" height="16" viewBox="0 0 16 16"><circle cx="8" cy="8" r="8" fill="#e94235"/><path d="M8 8L1 4A8 8 0 0 0 5 15.400z" fill="#34a853"/><path d="M8 8l-3 7.400A8 8 0 0 0 15.700 5.800z" fill="#fbbc05"/><circle cx="8" cy="8" r="3.800" fill="#4285f4" stroke="#fff" stroke-width="1.300"/></svg>
<div class="tb" style="left:323px;width:33px;background:#333"></div>
<div class="a" style="left:323px;top:718px;width:33px;height:2px;background:#7ab6e6"></div>
<svg class="ic" style="left:331px;top:698px" width="17" height="17" viewBox="0 0 17 17"><circle cx="8.500" cy="8.500" r="8" fill="#1477c8"/><path d="M1 10C2 4 8 1 12.500 3c3 1.300 4.500 4 4 6.500H7c.5 3 5 4 8.500 2C13.500 16 8 17 4.500 14.500 6 15 4 9 9 6.500 5 6.500 2 8 1 10z" fill="#37cdb8"/></svg>
<svg class="ic" style="left:365px;top:700px" width="15" height="13" viewBox="0 0 15 13"><path d="M0 1h6l1 2h8v10H0z" fill="#efc24a"/><rect x="3" y="8" width="9" height="5" fill="#2f8fd0"/></svg>
<svg class="ic" style="left:397px;top:699px" width="15" height="15" viewBox="0 0 15 15"><rect y="3" width="15" height="12" rx="1.500" fill="#f2f2f2"/><path d="M4.500 3a3 3 0 0 1 6 0" fill="none" stroke="#2a8ad6"/><rect x="4" y="6" width="3" height="3" fill="#f25022"/><rect x="8" y="6" width="3" height="3" fill="#7fba00"/><rect x="4" y="10" width="3" height="3" fill="#00a4ef"/><rect x="8" y="10" width="3" height="3" fill="#ffb900"/></svg>
<svg class="ic" style="left:429px;top:699px" width="18" height="16" viewBox="0 0 18 16"><rect x="5" y="1" width="12" height="13" rx="1" fill="#2a8ad6"/><rect x="0" y="3" width="10" height="10" rx="1" fill="#0f5fb0"/><circle cx="5" cy="8" r="2.500" fill="none" stroke="#fff" stroke-width="1.300"/><circle cx="13" cy="12" r="4" fill="#1b6fbf" stroke="#0a0a0a"/></svg>
<div class="a" style="left:428px;top:718px;width:23px;height:2px;background:#7ab6e6"></div>
<svg class="ic" style="left:462px;top:699px" width="17" height="15" viewBox="0 0 17 15"><rect x="4" y="0" width="13" height="15" rx="1" fill="#2b7cd3"/><rect x="4" y="10" width="13" height="5" fill="#103f91"/><rect x="0" y="3" width="9" height="9" rx="1" fill="#185abd"/><path d="M1.500 5l1 4.500L4.500 6l2 3.500 1-4.500" fill="none" stroke="#fff"/></svg>
<div class="a" style="left:457px;top:718px;width:28px;height:2px;background:#7ab6e6"></div>
<div class="tb" style="left:1001px;width:110px;background:#1d1d1d"></div>
<svg class="ic" style="left:1009px;top:698px" width="18" height="16" viewBox="0 0 18 16"><circle cx="9" cy="9" r="6.500" fill="#f39a1f"/><path d="M1 7a3 3 0 0 1 4-3 3.500 3.500 0 0 1 6 1 2.500 2.500 0 0 1 0 4H3A2 2 0 0 1 1 7z" fill="#b9cdf0"/><path d="M8 13a2 2 0 0 1 3-2 2.500 2.500 0 0 1 5 .5 1.700 1.700 0 0 1 0 3.500H10a1.700 1.700 0 0 1-2-2z" fill="#2f8fe0"/></svg>
<div class="t" style="left:1031px;top:705px;font-size:9px;color:#eee">75°F</div>
<div class="t" style="left:1055px;top:705px;font-size:9px;color:#eee">Partly sunny</div>
<svg class="ic" style="left:1123px;top:704px" width="9" height="6"><path d="M.5 5L4.500 1l4 4" fill="none" stroke="#eee"/></svg>
<svg class="ic" style="left:1144px;top:701px" width="11" height="12"><rect x=".5" y="3" width="7" height="7" rx="1" fill="none" stroke="#eee"/><path d="M8 5l2.500-1.500v5L8 7M3 .5h3" fill="none" stroke="#eee"/></svg>
<svg class="ic" style="left:1165px;top:701px" width="11" height="11"><path d="M2 1h8v7H5M.5 3h2.500v8H.5z" fill="none" stroke="#eee"/></svg>
<svg class="ic" style="left:1186px;top:702px" width="11" height="10"><path d="M0 3.500h2.500L5 1v8L2.500 6.500H0zM7 3a3 3 0 0 1 0 4M9 1.500a5.500 5.500 0 0 1 0 7" fill="none" stroke="#eee"/></svg>
<div class="t" style="left:1209px;top:698.500px;font-size:7.800px;color:#eee">6:30 PM</div>
<div class="t" style="left:1207px;top:710.500px;font-size:7.800px;color:#eee">10/7/2025</div>
<svg class="ic" style="left:1253px;top:702px" width="11" height="10"><path d="M0 0h11v7H4L2 9.500V7H0z" fill="#eee"/></svg>
<div class="a" style="left:1257px;top:706px;width:13px;height:11px;background:#333;border:1px solid #888;border-radius:6px"></div>
<div class="t" style="left:1259.500px;top:710px;font-size:7.500px;color:#fff;font-weight:bold">27</div>
</body>
</html>
